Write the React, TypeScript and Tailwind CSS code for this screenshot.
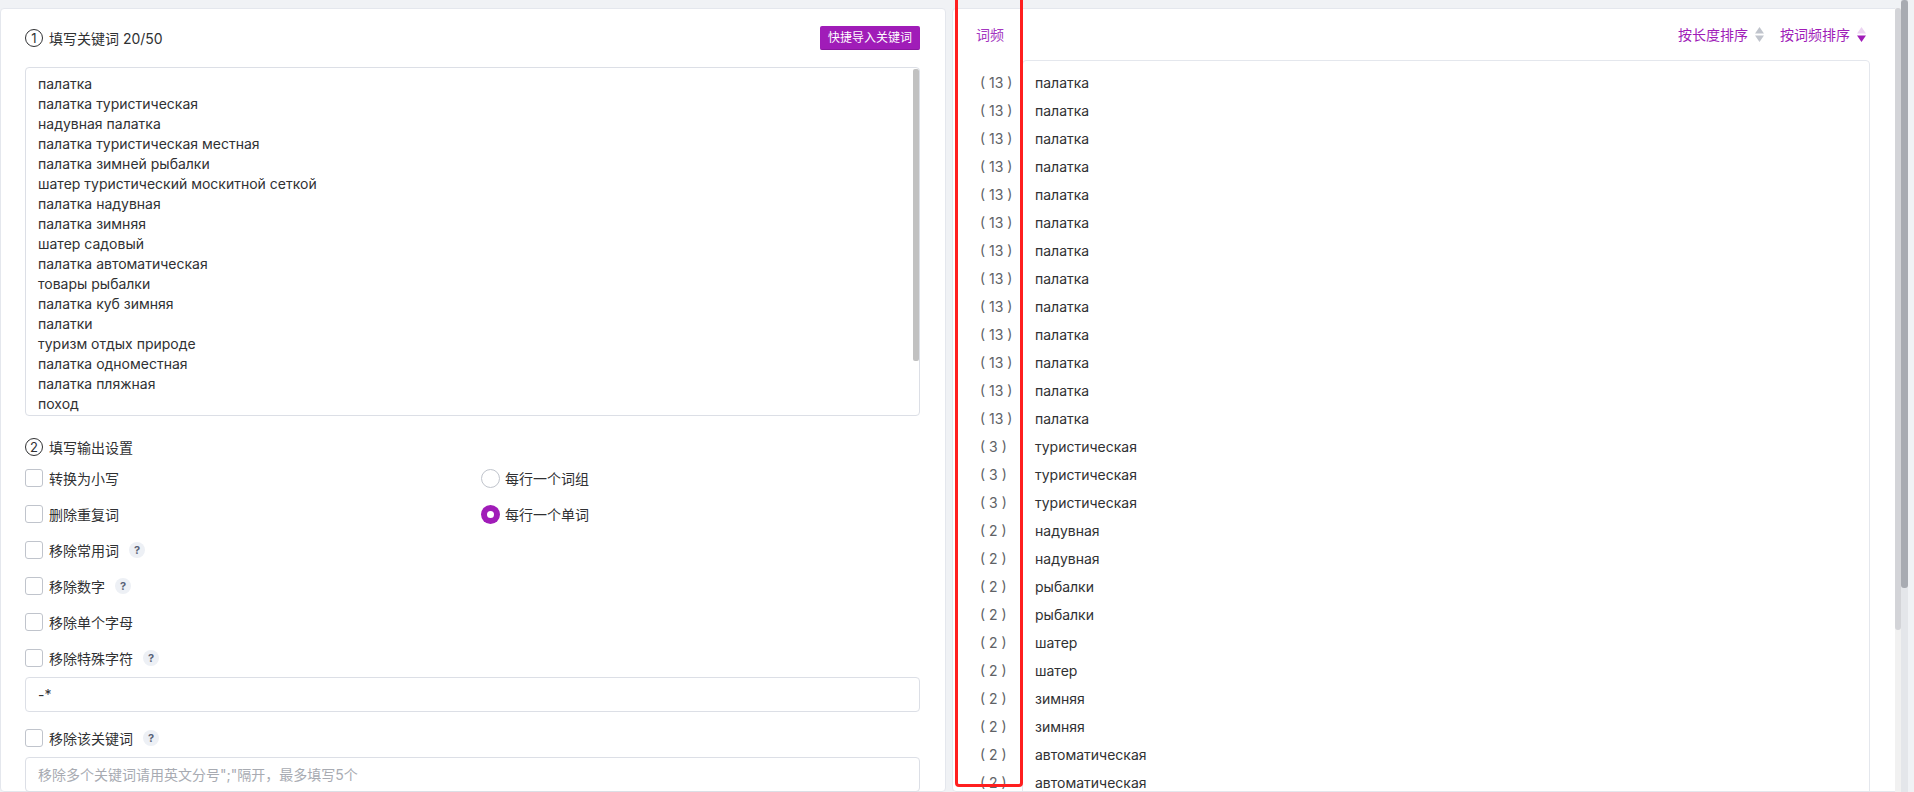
import React from "react";

/** 左侧关键词文本 */
const KEYWORDS = [
  "палатка",
  "палатка туристическая",
  "надувная палатка",
  "палатка туристическая местная",
  "палатка зимней рыбалки",
  "шатер туристический москитной сеткой",
  "палатка надувная",
  "палатка зимняя",
  "шатер садовый",
  "палатка автоматическая",
  "товары рыбалки",
  "палатка куб зимняя",
  "палатки",
  "туризм отдых природе",
  "палатка одноместная",
  "палатка пляжная",
  "поход",
];

/** 词频结果 */
const FREQ: [number, string][] = [
  ...Array.from({ length: 13 }, () => [13, "палатка"] as [number, string]),
  [3, "туристическая"],
  [3, "туристическая"],
  [3, "туристическая"],
  [2, "надувная"],
  [2, "надувная"],
  [2, "рыбалки"],
  [2, "рыбалки"],
  [2, "шатер"],
  [2, "шатер"],
  [2, "зимняя"],
  [2, "зимняя"],
  [2, "автоматическая"],
  [2, "автоматическая"],
];

function Circled({ n }: { n: number }) {
  return (
    <span className="w-[18px] h-[18px] rounded-full border border-[#303133] flex items-center justify-center text-[13px] leading-none">
      {n}
    </span>
  );
}

function Checkbox({ label, help }: { label: string; help?: boolean }) {
  return (
    <label className="flex items-center h-9">
      <span className="w-[18px] h-[18px] rounded-[3px] border border-[#c0c4cc] bg-white" />
      <span className="ml-[6px] text-[14px] text-[#303133]">{label}</span>
      {help && (
        <span className="ml-[10px] w-4 h-4 rounded-full bg-[#edf0f5] text-[#5a6478] text-[11px] font-bold flex items-center justify-center">
          ?
        </span>
      )}
    </label>
  );
}

function Radio({ label, checked }: { label: string; checked?: boolean }) {
  return (
    <label className="flex items-center h-9">
      {checked ? (
        <span className="w-[19px] h-[19px] rounded-full bg-[#a01cb8] flex items-center justify-center">
          <span className="w-[7px] h-[7px] rounded-full bg-white" />
        </span>
      ) : (
        <span className="w-[19px] h-[19px] rounded-full border border-[#c0c4cc] bg-white" />
      )}
      <span className="ml-[5px] text-[14px] text-[#303133]">{label}</span>
    </label>
  );
}

function SortIcon({ active }: { active?: boolean }) {
  return (
    <svg width="9" height="15" viewBox="0 0 9 15" className="ml-[7px]">
      <path d="M4.5 0 L9 6.5 H0 Z" fill={active ? "#ecd3f2" : "#c0c4cc"} />
      <path d="M0 8.5 H9 L4.5 15 Z" fill={active ? "#a01cb8" : "#c0c4cc"} />
    </svg>
  );
}

export default function App() {
  return (
    <div className="relative w-[1914px] h-[792px] overflow-hidden bg-[#f0f2f5] flex font-[Inter,'Noto_Sans_CJK_SC',sans-serif] text-[#303133]">
      {/* 左侧：输入设置 */}
      <div className="w-[946px] h-[784px] mt-2 bg-white rounded-[4px] border border-[#e4e7ed] pl-6 pr-[25px] pt-[17px]">
        <div className="flex items-center justify-between h-6">
          <div className="flex items-center gap-[6px] text-[14px]">
            <Circled n={1} />
            <span>填写关键词 20/50</span>
          </div>
          <button className="h-6 px-2 rounded-[2px] bg-[#a01cb8] border-b border-[#8a16a0] text-white text-[12px] leading-none">
            快捷导入关键词
          </button>
        </div>

        <div className="relative mt-[17px] h-[349px] border border-[#dcdfe6] rounded-[4px] pl-3 pt-[6px] overflow-hidden text-[14px] leading-5 text-[#303133]">
          {KEYWORDS.map((k, i) => (
            <div key={i}>{k}</div>
          ))}
          <div className="absolute right-0 top-[1px] w-[6px] h-[292px] rounded-[2px] bg-[#c1c1c1]" />
        </div>

        <div className="mt-[21px] h-5 flex items-center gap-[6px] text-[14px]">
          <Circled n={2} />
          <span>填写输出设置</span>
        </div>

        <div className="mt-[3px] grid grid-cols-[456px_1fr]">
          <Checkbox label="转换为小写" />
          <Radio label="每行一个词组" />
          <Checkbox label="删除重复词" />
          <Radio label="每行一个单词" checked />
          <Checkbox label="移除常用词" help />
          <div />
          <Checkbox label="移除数字" help />
          <div />
          <Checkbox label="移除单个字母" />
          <div />
          <Checkbox label="移除特殊字符" help />
          <div />
        </div>

        <div className="mt-px h-[35px] border border-[#dcdfe6] rounded-[4px] pl-3 flex items-center text-[14px]">
          -*
        </div>

        <div className="mt-2">
          <Checkbox label="移除该关键词" help />
        </div>

        <div className="mt-px h-[35px] border border-[#dcdfe6] rounded-[4px] pl-3 flex items-center text-[14px] text-[#a8abb2]">
          移除多个关键词请用英文分号";"隔开，最多填写5个
        </div>
      </div>

      {/* 右侧：词频结果 */}
      <div className="ml-[6px] w-[955px] h-[784px] mt-2 bg-white rounded-[4px] border border-[#e4e7ed] overflow-hidden">
        <div className="pt-[15px] pl-[23px] pr-[40px] h-[44px] flex items-start justify-between">
          <div className="h-5 flex items-center text-[14px] text-[#a436c0]">词频</div>
          <div className="h-5 flex items-center text-[14px] text-[#a01cb8]">
            <span>按长度排序</span>
            <SortIcon />
            <span className="ml-[16px]">按词频排序</span>
            <SortIcon active />
          </div>
        </div>

        <div className="mt-[7px] pl-[23px] flex">
          <div className="w-[46px] pl-[4px] pt-2 text-[14px] text-[#606266]">
            {FREQ.map(([n], i) => (
              <div key={i} className="h-7 flex items-center whitespace-pre">
                {`( ${n} )`}
              </div>
            ))}
          </div>
          <div className="w-[848px] h-[760px] border border-[#e4e7ed] rounded-[4px] pt-[7px] pl-3 text-[14px] text-[#303133]">
            {FREQ.map(([, w], i) => (
              <div key={i} className="h-7 flex items-center">
                {w}
              </div>
            ))}
          </div>
        </div>
      </div>

      {/* 滚动条 */}
      <div className="absolute left-[1895px] top-2 w-[6px] h-[784px] bg-[#f1f1f1]">
        <div className="h-[622px] w-full rounded-[3px] bg-[#d3d4d8]" />
      </div>
      <div className="absolute left-[1901px] top-0 w-[7px] h-[792px] bg-[#e4e6ea]">
        <div className="h-[588px] w-full rounded-[3px] bg-[#a8abb2]" />
      </div>

      {/* 红色标注框 */}
      <div className="absolute left-[955px] top-[-6px] w-[68px] h-[793px] border-[3px] border-[#ff1f1f] rounded-[4px]" />
    </div>
  );
}
